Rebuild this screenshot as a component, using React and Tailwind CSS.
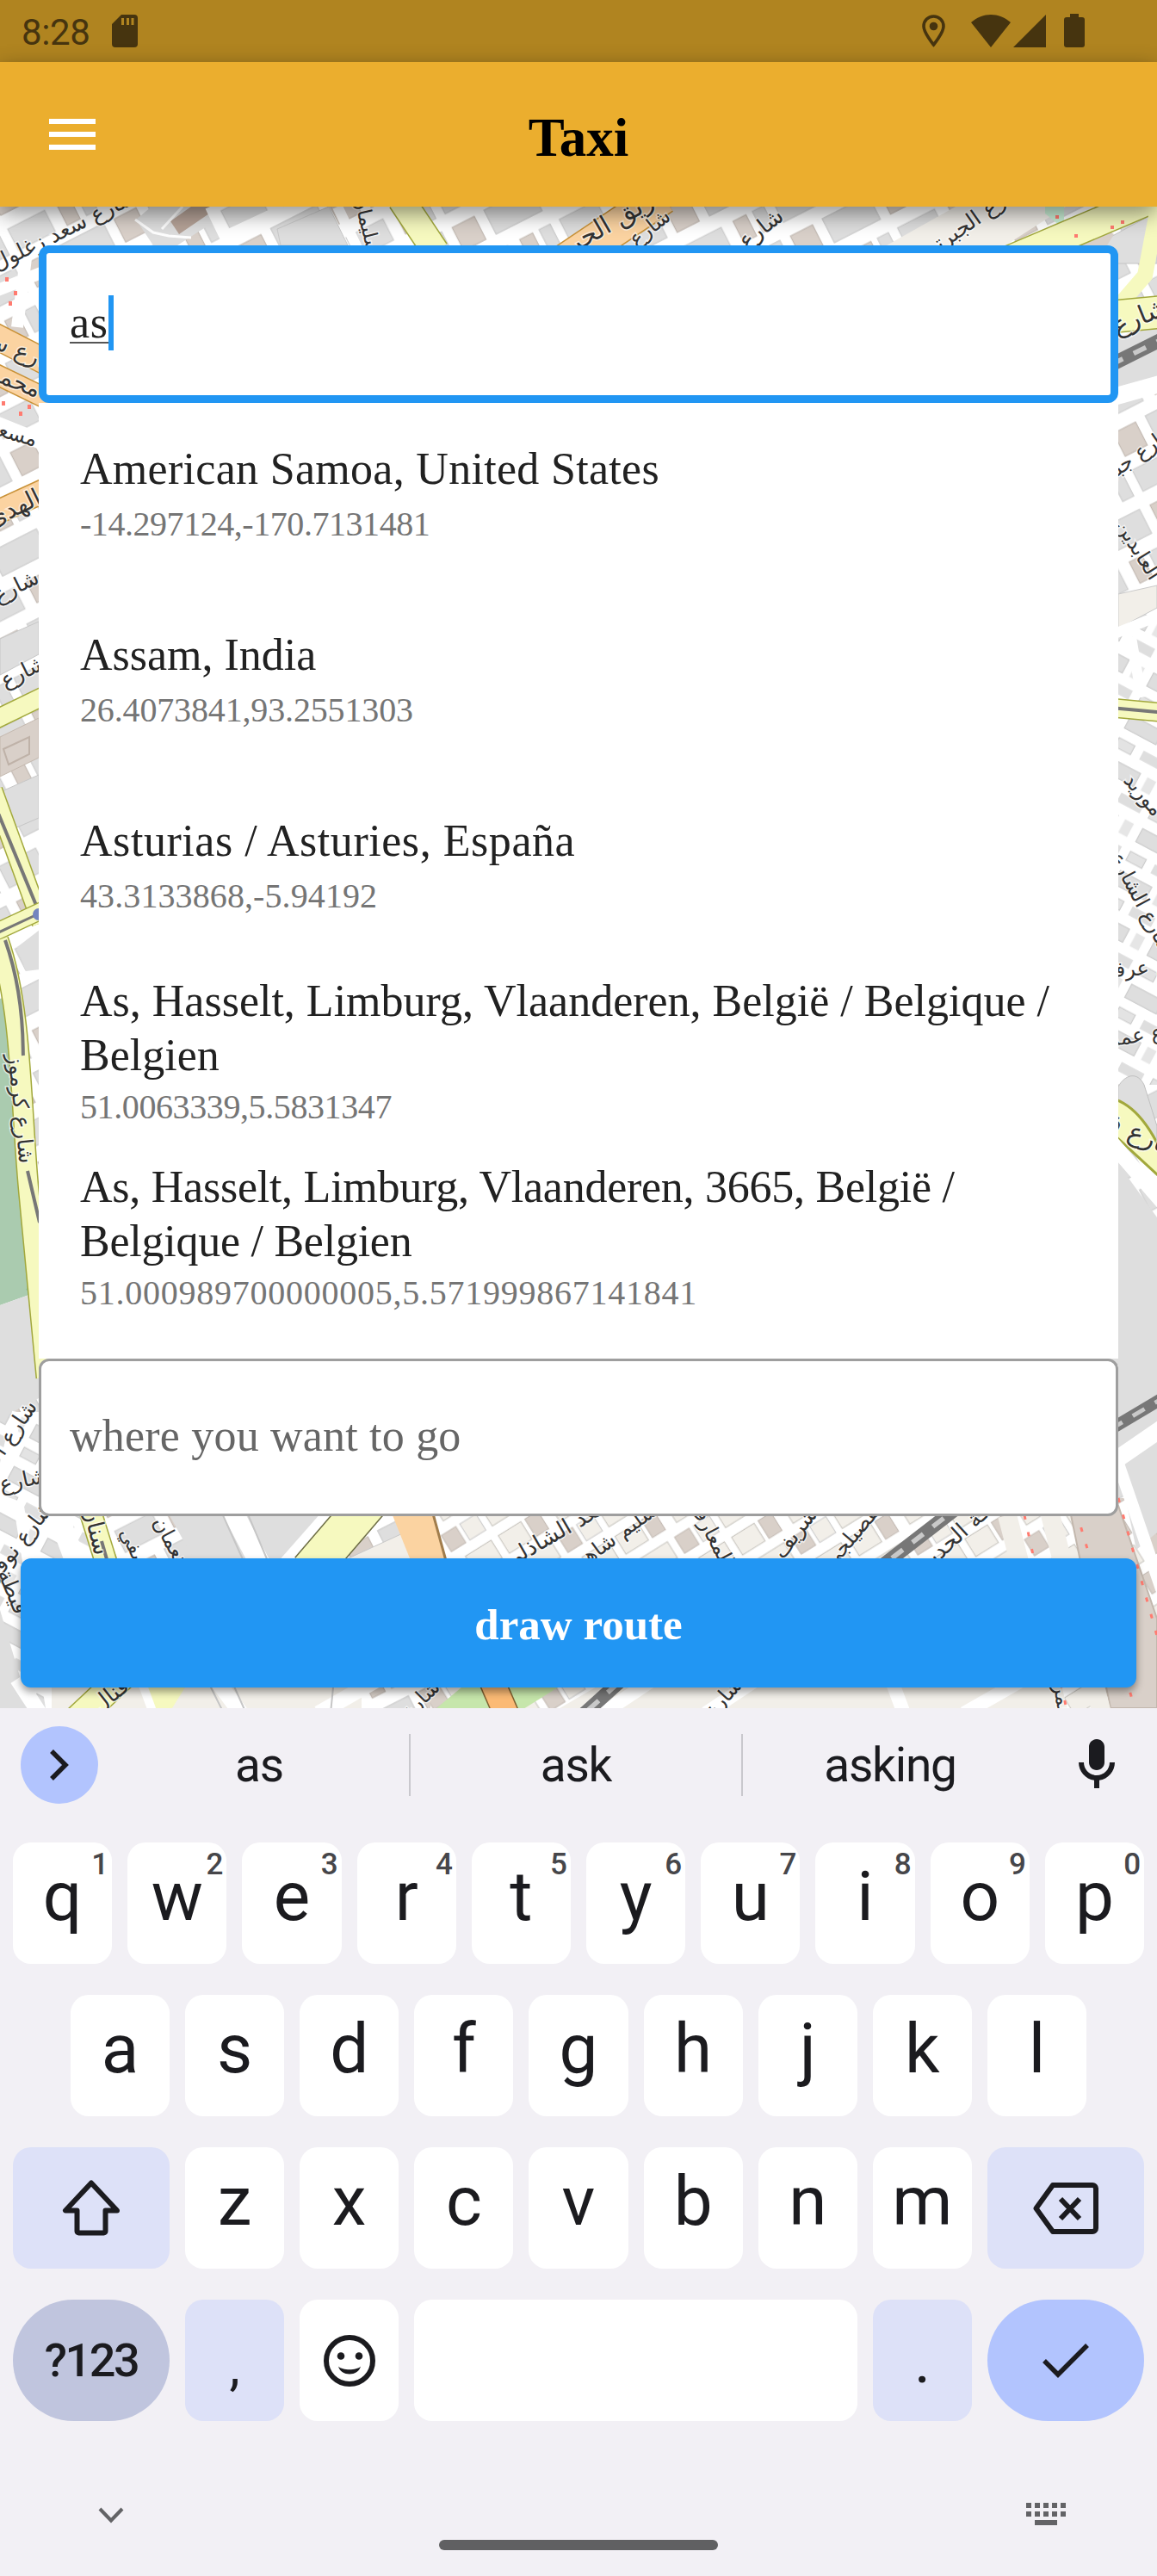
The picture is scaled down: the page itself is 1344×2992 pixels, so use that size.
import React from "react";

const places = [
  { title: "American Samoa, United States", coords: "-14.297124,-170.7131481", titleTracking: "tracking-[0.3px]", tracking: "tracking-[-0.45px]" },
  { title: "Assam, India", coords: "26.4073841,93.2551303", titleTracking: "tracking-[0px]", tracking: "tracking-[-0.15px]" },
  { title: "Asturias / Asturies, España", coords: "43.3133868,-5.94192", titleTracking: "tracking-[0.55px]", tracking: "tracking-[0.1px]" },
  { title: "As, Hasselt, Limburg, Vlaanderen, België / Belgique / Belgien", coords: "51.0063339,5.5831347", titleTracking: "tracking-[0px]", tracking: "tracking-[-0.4px]", tall: true },
  { title: "As, Hasselt, Limburg, Vlaanderen, 3665, België / Belgique / Belgien", coords: "51.000989700000005,5.571999867141841", titleTracking: "tracking-[-0.25px]", tracking: "tracking-[0.75px]", tall: true },
];

// [text, x, y, rotation, size]
const mapLabels = [
  ["شارع سعد زغلول", 76, 270, -26, 25],
  ["سليمان", 424, 262, 76, 23],
  ["طريق الحرية", 712, 262, -30, 30],
  ["شارع س", 742, 278, -38, 24],
  ["شارع", 886, 268, -38, 26],
  ["شارع الجبرتي", 1132, 258, -35, 25],
  ["شارع سالم", 14, 408, 22, 27],
  ["محمد", 16, 446, 22, 27],
  ["مسعد", 14, 506, 16, 24],
  ["الهدى", 18, 594, -26, 28],
  ["شارع", 20, 684, -26, 25],
  ["شارع م", 18, 788, -26, 25],
  ["شارع كرموز", 21, 1288, 84, 25],
  ["شارع", 1326, 372, -22, 30],
  ["شارع جبر", 1326, 528, -35, 24],
  ["العابدين", 1320, 640, 58, 24],
  ["موريد", 1326, 925, 50, 24],
  ["شارع الشارع", 1324, 1050, 62, 24],
  ["ع عرفة", 1320, 1128, -4, 24],
  ["ع عمر", 1320, 1206, -8, 24],
  ["شارع ف", 1322, 1322, 22, 30],
  ["شارع ا", 20, 1660, -56, 25],
  ["شارع ي", 14, 1725, -12, 25],
  ["شارع نوفل", 24, 1794, -52, 25],
  ["سنان", 108, 1778, 76, 27],
  ["نعمان", 195, 1790, 62, 24],
  ["صفي", 154, 1800, 64, 23],
  ["سعد الشاذلي", 650, 1782, -30, 26],
  ["سليم شاهين", 712, 1790, -36, 24],
  ["المعارف", 824, 1782, 62, 24],
  ["شريف", 926, 1782, -52, 25],
  ["الفصيلجي", 995, 1782, -50, 24],
  ["سكة الحديد", 1120, 1780, -42, 26],
  ["قنال", 130, 1972, -38, 26],
  ["شارع", 490, 1976, -45, 24],
  ["شارع", 842, 1974, -48, 24],
  ["عمر", 1232, 1976, 80, 23],
  ["قيطة", 12, 1850, 68, 25],
];

function Label({ item }) {
  const [text, x, y, angle, size] = item;
  return (
    <text
      x={x}
      y={y + 5}
      transform={`rotate(${angle} ${x} ${y})`}
      fontSize={size}
      textAnchor="middle"
      fontFamily="'DejaVu Sans', sans-serif"
      fill="#333333"
      stroke="#ffffff"
      strokeOpacity="0.6"
      strokeWidth="3"
      paintOrder="stroke"
    >
      {text}
    </text>
  );
}

function Road({ d, color = "#f6f9bf", edge = "#a2a83c", width = 24 }) {
  return (
    <g fill="none">
      <path d={d} stroke={edge} strokeWidth={width + 3} />
      <path d={d} stroke={color} strokeWidth={width} />
    </g>
  );
}

function Rail({ d, width = 10 }) {
  return (
    <g fill="none">
      <path d={d} stroke="#777777" strokeWidth={width} />
      <path d={d} stroke="#c9c9c9" strokeWidth={width * 0.35} strokeDasharray="16 14" />
    </g>
  );
}

function StreetMap() {
  return (
    <svg className="absolute inset-0 h-full w-full" viewBox="0 240 1344 1744" preserveAspectRatio="none" aria-hidden="true">
      <defs>
        <pattern id="blocksA" width="96" height="78" patternUnits="userSpaceOnUse" patternTransform="rotate(-27) scale(1.2)">
          <rect width="96" height="78" fill="#ffffff" />
          <rect x="2" y="5" width="24" height="25" fill="#d9d0c9" stroke="#c4bbb4" />
          <rect x="37" y="4" width="50" height="26" fill="#dedede" stroke="#cdcdcd" />
          <rect x="2" y="45" width="40" height="23" fill="#dedede" stroke="#cdcdcd" />
          <rect x="55" y="45" width="14" height="23" fill="#d9d0c9" stroke="#c4bbb4" />
          <rect x="76" y="45" width="12" height="23" fill="#dedede" stroke="#cdcdcd" />
        </pattern>
        <pattern id="blocksB" width="104" height="66" patternUnits="userSpaceOnUse" patternTransform="rotate(-32) scale(1.1)">
          <rect width="104" height="66" fill="#ffffff" />
          <rect x="3" y="4" width="28" height="22" fill="#f2efe9" stroke="#c9c6c0" />
          <rect x="36" y="4" width="16" height="22" fill="#d9d0c9" stroke="#c4bbb4" />
          <rect x="66" y="4" width="32" height="22" fill="#f2efe9" stroke="#c9c6c0" />
          <rect x="3" y="38" width="44" height="20" fill="#f2efe9" stroke="#c9c6c0" />
          <rect x="56" y="38" width="18" height="20" fill="#d9d0c9" stroke="#c4bbb4" />
          <rect x="79" y="38" width="20" height="20" fill="#f2efe9" stroke="#cdcdcd" />
        </pattern>
        <pattern id="blocksC" width="64" height="48" patternUnits="userSpaceOnUse" patternTransform="rotate(28) scale(1.15)">
          <rect width="64" height="48" fill="#ffffff" />
          <rect x="4" y="5" width="36" height="15" fill="#dedede" stroke="#cbcbcb" />
          <rect x="48" y="5" width="10" height="15" fill="#e6e6e6" />
          <rect x="4" y="31" width="18" height="10" fill="#e3e3e3" stroke="#cbcbcb" />
          <rect x="32" y="31" width="26" height="10" fill="#dedede" />
        </pattern>
      </defs>

      <rect x="0" y="240" width="1344" height="1744" fill="url(#blocksA)" />
      <rect x="1290" y="700" width="60" height="560" fill="url(#blocksC)" />
      <rect x="0" y="1640" width="110" height="344" fill="url(#blocksC)" />
      <rect x="500" y="1740" width="844" height="250" fill="url(#blocksB)" />

      {/* top strip */}
      <path d="M158 255 176 240h70l8 14-48 31h-28z" fill="#dedede" />
      <path d="M198 257 222 240h24l0 6-38 26z" fill="#b5a297" />
      <path d="M157 255 178 270l18 4 26 2M188 266l24-26" fill="none" stroke="#fff" strokeWidth="3" />
      <path d="M322 266 382 240 404 285H326z" fill="#dedede" stroke="#c9c9c9" />
      <path d="M266 272 330 242 M244 240 268 290M392 240 416 290" stroke="#fff" strokeWidth="12" />
      <Road d="M466 232 506 292" width={30} />
      <Road d="M655 305 770 228" color="#fbd3a1" edge="#c99238" width={40} />
      <path d="M1030 285 1110 240h128l-70 45z" fill="#f2efe9" />
      <path d="M1214 240h22l0 26-22-18z" fill="#ccf2d8" />
      <path d="M1272 285 1344 246v60h-72z" fill="#dedede" stroke="#c4c4c4" />
      <path d="M1256 285 1280 264l14 8-8 13z" fill="#d9d0c9" />
      <Road d="M1165 305 1360 222" width={32} />
      <path d="M1344 246 1330 320 1299 356" fill="none" stroke="#f6f9bf" strokeWidth="18" />
      <path d="M1228 250v4M1250 272v4M1292 262v4M1304 256v4" stroke="#ff7b70" strokeWidth="4" />

      {/* left edge */}
      <path d="M-10 340 60 312M30 300 20 380" stroke="#fff" strokeWidth="14" />
      <Road d="M-10 388 60 424" color="#fbd3a1" edge="#c99238" width={28} />
      <Road d="M-10 432 60 466" color="#fbd3a1" edge="#c99238" width={22} />
      <path d="M8 322v5M18 338v5M12 350v5M4 466v5M24 478v5M34 470v5" stroke="#ff7b70" strokeWidth="4" />
      <path d="M-5 492 60 518" stroke="#fff" strokeWidth="18" />
      <Road d="M-10 598 60 566" color="#fbd3a1" edge="#c99238" width={26} />
      <path d="M0 742 45 722V760L0 784z" fill="#dedede" stroke="#c6c6c6" />
      <Road d="M-10 838 60 804" width={20} />
      <path d="M0 856 45 834V880L0 902z" fill="#d9d0c9" stroke="#c4b8ae" />
      <path d="M4 870l30-14v20l-24 12z" fill="none" stroke="#bfb2a8" strokeWidth="2" />
      <path d="M0 920 45 900V950L8 966z" fill="#dedede" stroke="#c6c6c6" />
      <Road d="M-8 918 48 1072" width={20} />
      <path d="M-8 930 48 1066" fill="none" stroke="#777" strokeWidth="4" />
      <Road d="M-8 1084 52 1056" width={18} />
      <path d="M-8 1086 52 1058" fill="none" stroke="#777" strokeWidth="3" />
      <circle cx="45" cy="1062" r="7" fill="#7385bf" />
      <path d="M0 1160H10L45 1500 0 1516z" fill="#aacbaf" />
      <path d="M30 1498 45 1482v22z" fill="#8cc096" />
      <path d="M0 1516 45 1500V1624L0 1648z" fill="#dedede" />
      <path d="M20 1100 46 1080V1126L30 1128z" fill="#dedede" />
      <Road d="M-2 1092C26 1170 24 1290 34 1390L54 1600" width={22} />
      <path d="M6 1092C30 1160 26 1220 27 1226M32 1360 46 1420" fill="none" stroke="#777" strokeWidth="4" />
      <path d="M-5 1740 22 1750 60 1990M20 1640-8 1760" fill="none" stroke="#fff" strokeWidth="12" />
      <path d="M0 1870 34 1984H0z" fill="#dedede" />

      {/* right edge */}
      <Road d="M1290 368 1354 362" width={36} />
      <path d="M1344 396 1299 416V470L1344 440z" fill="#dedede" />
      <Rail d="M1290 424 1354 392" width={16} />
      <path d="M1290 462 1354 444" stroke="#fff" strokeWidth="20" />
      <path d="M1299 690 1344 680V706L1299 730z" fill="#f2efe9" stroke="#c9c9c9" />
      <path d="M1290 738 1354 712M1314 740 1326 810" stroke="#fff" strokeWidth="12" />
      <Road d="M1290 822 1354 828" width={20} />
      <path d="M1290 822 1354 828" stroke="#777" strokeWidth="4" />
      <path d="M1299 1262c8-14 22-18 30-2l15 48v50l-45-50z" fill="#dedede" stroke="#c0c0c0" />
      <path d="M1292 1276C1316 1282 1340 1310 1356 1356L1344 1364 1292 1316z" fill="#f6f9bf" stroke="#a2a83c" strokeWidth="3" />
      <path d="M1299 1352 1344 1414V1650H1299z" fill="#dedede" />
      <path d="M1290 1326 1354 1400" stroke="#fff" strokeWidth="18" />
      <path d="M1299 1660H1344V1780L1320 1800 1299 1700z" fill="#dedede" />
      <Rail d="M1290 1660 1354 1622" width={14} />
      <path d="M1290 1700 1354 1656" stroke="#fff" strokeWidth="20" />

      {/* bottom strips */}
      <path d="M186 1740H420L318 1820H230z" fill="#dedede" />
      <path d="M60 1740 90 1820M262 1740 304 1820" stroke="#fff" strokeWidth="24" />
      <path d="M250 1740 286 1820M280 1740 314 1820" stroke="#c6c6c6" strokeWidth="2" />
      <path d="M400 1740 326 1824" stroke="#fff" strokeWidth="18" />
      <path d="M396 1814 470 1780 490 1814z" fill="#f2efe9" stroke="#c9c9c9" />
      <Road d="M100 1740 128 1830" width={24} />
      <path d="M118 1790 128 1825" stroke="#777" strokeWidth="4" />
      <Road d="M432 1740 360 1824" width={44} edge="#6d6d45" />
      <path d="M448 1740H498L520 1820H480z" fill="#fbd3a1" />
      <path d="M498 1740 520 1820" stroke="#a17d4c" strokeWidth="3" />
      <path d="M1240 1740H1296L1344 1880V1984H1290z" fill="#d9d0c9" stroke="#c2b7ad" strokeWidth="2" />
      <path d="M1170 1760 1230 1990M1215 1740 1280 1990" stroke="#f2efe9" strokeWidth="22" />
      <path d="M1190 1760 1240 1990M1250 1755 1320 1990M1299 1740 1344 1900" fill="none" stroke="#ff7b70" strokeWidth="3" strokeDasharray="5 15" />
      <path d="M1299 1700 1354 1860" stroke="#fff" strokeWidth="14" />
      <Rail d="M1120 1745 1010 1830" width={16} />
      <path d="M60 1955H420V1990H60z" fill="#f2efe9" />
      <path d="M20 1950 46 1990M250 1950 280 1990M440 1950 370 1990" stroke="#fff" strokeWidth="18" />
      <path d="M240 1950 260 1990M268 1950 286 1990M388 1950 384 1990" stroke="#c6c6c6" strokeWidth="2" />
      <Road d="M150 1940 84 2002" width={30} />
      <path d="M160 1955H218L200 1984H172z" fill="#f6f9bf" />
      <path d="M165 1955 178 1990" stroke="#fff" strokeWidth="10" />
      <path d="M548 1950H664L600 1990H500z" fill="#c6e6ab" />
      <Road d="M566 1940 592 2000" color="#fbba75" edge="#806030" width={28} />
      <path d="M700 1955H1220V1990H640z" fill="#f2efe9" />
      <path d="M760 1950 700 1990M880 1950 820 1990M1035 1950 1050 1990M1190 1950 1120 1990" stroke="#fff" strokeWidth="16" />
      <Rail d="M740 1935 668 2000" width={16} />

      {mapLabels.map((item, i) => (
        <Label key={i} item={item} />
      ))}
    </svg>
  );
}

function StatusBar() {
  return (
    <header className="flex h-[72px] shrink-0 items-center bg-[#b08420] pl-[25px] pr-[84px] text-[#46340f]">
      <span className="mt-1 w-[80px] font-['Roboto'] text-[42px] leading-[42px] tracking-[-0.4px]">8:28</span>
      <svg className="ml-[25px] h-[38px] w-[30px]" viewBox="0 0 30 38" fill="currentColor">
        <path fillRule="evenodd" d="M11 0h15a4 4 0 0 1 4 4v30a4 4 0 0 1-4 4H4a4 4 0 0 1-4-4V11zM11 4v8h3V4zm6 0v8h3V4zm5.500 0v8h3V4z" />
      </svg>
      <div className="ml-auto flex h-[40px] items-start">
        <svg className="mt-[1px] h-[38px] w-[27px]" viewBox="0 0 27 38">
          <path d="M13.500 2C7 2 2 7 2 13.500 2 21 13.500 35 13.500 35S25 21 25 13.500C25 7 20 2 13.500 2z" fill="none" stroke="currentColor" strokeWidth="3.600" />
          <circle cx="13.500" cy="13.500" r="4.800" fill="currentColor" />
        </svg>
        <svg className="ml-[30px] mt-[1px] h-[38px] w-[46px]" viewBox="0 0 46 38" fill="currentColor">
          <path d="M0 9C14-3 32-3 46 9L23 38z" />
        </svg>
        <svg className="ml-[3px] mt-[1px] h-[38px] w-[38px]" viewBox="0 0 38 38" fill="currentColor">
          <path d="M38 0v38H0z" />
        </svg>
        <svg className="ml-[21px] h-[39px] w-[24px]" viewBox="0 0 24 39" fill="currentColor">
          <path d="M7 0h10v4h4a3 3 0 0 1 3 3v29a3 3 0 0 1-3 3H3a3 3 0 0 1-3-3V7a3 3 0 0 1 3-3h4z" />
        </svg>
      </div>
    </header>
  );
}

function AppBar() {
  return (
    <div className="relative z-10 grid h-[168px] shrink-0 grid-cols-[1fr_auto_1fr] items-center bg-[#ebae2e] px-[57px] shadow-[0_8px_24px_rgba(0,0,0,0.45)]">
      <button className="flex h-[36px] w-[54px] flex-col justify-between" aria-label="Menu">
        <span className="h-[6px] w-full bg-white" />
        <span className="h-[6px] w-full bg-white" />
        <span className="h-[6px] w-full bg-white" />
      </button>
      <h1 className="pt-[7px] font-['Liberation_Serif'] text-[63px] font-bold leading-[70px] text-black">Taxi</h1>
      <span />
    </div>
  );
}

function PlaceRow({ place }) {
  return (
    <li className={place.tall ? "h-[216px] pl-[48px] pr-[48px] pt-[15px]" : "h-[216px] pl-[48px] pr-[48px] pt-[45px]"}>
      <p className={`text-[52px] leading-[63px] text-[#212121] ${place.titleTracking}`}>{place.title}</p>
      <p className={`${place.tall ? "mt-[1px]" : "mt-[5px]"} text-[40px] leading-[56px] text-[#757575] ${place.tracking}`}>{place.coords}</p>
    </li>
  );
}

function Key({ children, hint, className = "" }) {
  return (
    <button className={`relative flex h-[141px] min-w-0 flex-1 items-center justify-center rounded-[21px] bg-white text-[80px] leading-none text-[#1b1b1f] ${className}`}>
      <span className="-mt-[15px]">{children}</span>
      {hint && <span className="absolute right-[4px] top-[8px] text-[35px] font-medium leading-[36px] text-[#46464a]">{hint}</span>}
    </button>
  );
}

const special = "flex h-[141px] shrink-0 items-center justify-center text-[#1b1b1f]";

function Keyboard() {
  return (
    <section className="flex h-[1008px] flex-col bg-[#f2f0f5] font-['Roboto'] text-[#1b1b1f]">
      <div className="flex h-[156px] items-center pb-[24px] pt-0">
        <button className="ml-[24px] flex h-[90px] w-[90px] shrink-0 items-center justify-center rounded-full bg-[#b2c4fe]">
          <svg className="h-[36px] w-[24px]" viewBox="0 0 24 36" fill="none" stroke="currentColor" strokeWidth="5.500">
            <path d="M3 2l16 16L3 34" />
          </svg>
        </button>
        <div className="ml-[13px] grid flex-1 grid-cols-[348px_388px_342px] items-center text-center text-[55px] leading-[72px] tracking-[-1.2px]">
          <span>as</span>
          <span className="relative before:absolute before:left-0 before:top-0 before:h-[72px] before:w-[2px] before:bg-[#c9c8cd] after:absolute after:right-0 after:top-0 after:h-[72px] after:w-[2px] after:bg-[#c9c8cd]">ask</span>
          <span>asking</span>
        </div>
        <svg className="mr-[34px] h-[72px] w-[72px] shrink-0" viewBox="0 0 24 24" fill="currentColor">
          <path d="M12 14c1.660 0 3-1.340 3-3V5c0-1.660-1.340-3-3-3S9 3.340 9 5v6c0 1.660 1.340 3 3 3zm5-3c0 2.760-2.240 5-5 5s-5-2.240-5-5H5c0 3.530 2.610 6.430 6 6.920V21h2v-3.080c3.390-.490 6-3.390 6-6.920h-2z" />
        </svg>
      </div>
      <div className="flex flex-col gap-[36px] px-[15px]">
        <div className="flex gap-[18px]">
          {[..."qwertyuiop"].map((c, i) => (
            <Key key={c} hint={String((i + 1) % 10)}>{c}</Key>
          ))}
        </div>
        <div className="flex gap-[18px] px-[67px]">
          {[..."asdfghjkl"].map((c) => (
            <Key key={c}>{c}</Key>
          ))}
        </div>
        <div className="flex gap-[18px]">
          <button className={`${special} w-[182px] rounded-[21px] bg-[#dde1f8]`} aria-label="Shift">
            <svg className="mt-[-2px] h-[66px] w-[68px]" viewBox="0 0 68 66" fill="none" stroke="currentColor" strokeWidth="6" strokeLinejoin="round">
              <path d="M34 4.500 4 36.500h13.500v24a2 2 0 0 0 2 2h29a2 2 0 0 0 2-2v-24H64z" />
            </svg>
          </button>
          {[..."zxcvbnm"].map((c) => (
            <Key key={c}>{c}</Key>
          ))}
          <button className={`${special} w-[182px] rounded-[21px] bg-[#dde1f8]`} aria-label="Backspace">
            <svg className="h-[60px] w-[76px]" viewBox="0 0 76 60" fill="none" stroke="currentColor" strokeWidth="6" strokeLinejoin="round">
              <path d="M23 3H69a4 4 0 0 1 4 4v46a4 4 0 0 1-4 4H23L3.500 30z" />
              <path d="M32 19 54 42M54 19 32 42" />
            </svg>
          </button>
        </div>
        <div className="flex gap-[18px]">
          <button className={`${special} w-[182px] rounded-full bg-[#c0c5de] text-[54px] font-medium tracking-[-2.500px]`}>?123</button>
          <button className={`${special} w-[115px] rounded-[21px] bg-[#dde1f8] text-[62px]`}>
            <span className="mt-[14px]">,</span>
          </button>
          <button className={`${special} w-[115px] rounded-[21px] bg-white`} aria-label="Emoji">
            <svg className="h-[60px] w-[60px]" viewBox="0 0 60 60" fill="none" stroke="currentColor" strokeWidth="6">
              <circle cx="30" cy="30" r="27" />
              <circle cx="20" cy="24.500" r="4.300" fill="currentColor" stroke="none" />
              <circle cx="41" cy="24.500" r="4.300" fill="currentColor" stroke="none" />
              <path d="M17 36.500c3 12 23 12 26 0-5 5-21 5-26 0z" fill="currentColor" stroke="none" />
            </svg>
          </button>
          <button className={`${special} flex-1 rounded-[21px] bg-white`} aria-label="Space" />
          <button className={`${special} w-[115px] rounded-[21px] bg-[#dde1f8] text-[72px]`}>
            <span className="mt-[3px]">.</span>
          </button>
          <button className={`${special} w-[182px] rounded-full bg-[#b2c4fe]`} aria-label="Done">
            <svg className="mt-[1px] h-[42px] w-[54px]" viewBox="0 0 54 42" fill="none" stroke="currentColor" strokeWidth="5.500">
              <path d="M2 21l16 16L52 3" />
            </svg>
          </button>
        </div>
      </div>
      <div className="grid grid-cols-[1fr_auto_1fr] px-[106px] pt-[95px] text-[#636366]">
        <svg className="ml-[8px] mt-[5px] h-[19px] w-[30px]" viewBox="0 0 30 19" fill="none" stroke="currentColor" strokeWidth="4">
          <path d="M2 2l13 13.500L28 2" />
        </svg>
        <span className="mt-[43px] h-[12px] w-[324px] rounded-full bg-[#606062]" />
        <svg className="h-[26px] w-[46px] justify-self-end" viewBox="0 0 46 26" fill="currentColor">
          {[0, 10, 20, 30, 40].map((x) => (
            <g key={x}>
              <rect x={x} y="0" width="6" height="6" />
              <rect x={x} y="10" width="6" height="6" />
            </g>
          ))}
          <rect x="10" y="20" width="26" height="6" />
        </svg>
      </div>
    </section>
  );
}

export default function App() {
  return (
    <div className="flex h-[2992px] w-[1344px] flex-col overflow-hidden font-['Liberation_Serif',serif]">
      <StatusBar />
      <AppBar />
      <main className="relative h-[1744px] overflow-hidden">
        <StreetMap />
        <div className="relative flex flex-col pt-[45px]">
          <div className="mx-[45px] flex h-[183px] items-center rounded-[12px] border-[9px] border-[#2196f3] bg-white pl-[27px]">
            <span className="flex h-[64px] items-start">
              <span className="-mt-[2px] h-[56px] border-b-2 border-[#555555] text-[52px] leading-[64px] tracking-[0.7px] text-[#212121]">as</span>
              <span className="-mt-[2px] h-[64px] w-[6px] bg-[#2196f3]" />
            </span>
          </div>
          <ul className="mx-[45px] h-[1110px] bg-white">
            {places.map((p) => (
              <PlaceRow key={p.title} place={p} />
            ))}
          </ul>
          <div className="mx-[45px] flex h-[183px] items-center rounded-[12px] border-[3px] border-[#9e9e9e] bg-white pb-[4px] pl-[33px]">
            <span className="text-[52px] leading-[64px] tracking-[0.2px] text-[#666666]">where you want to go</span>
          </div>
          <button className="mx-[24px] mt-[49px] h-[150px] rounded-[12px] bg-[#2196f3] pt-[4px] text-[51px] font-bold text-white shadow-[0_5px_10px_rgba(0,0,0,0.4)]">
            draw route
          </button>
        </div>
      </main>
      <Keyboard />
    </div>
  );
}
